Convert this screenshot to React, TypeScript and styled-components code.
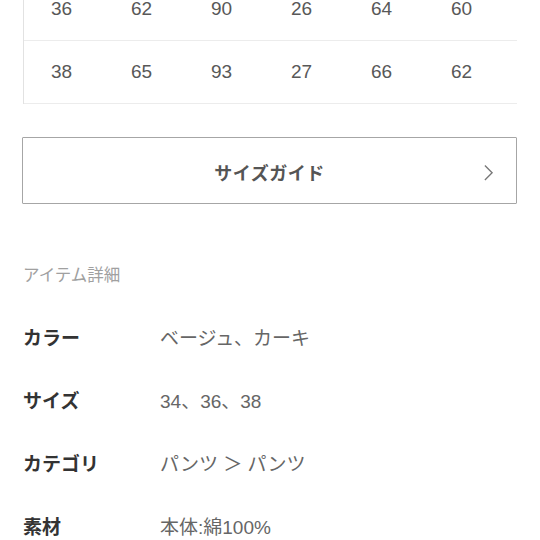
import React from 'react'
import styled, { createGlobalStyle } from 'styled-components'

const GlobalStyle = createGlobalStyle`
  html, body {
    margin: 0;
    padding: 0;
    background: #fff;
    overflow: hidden;
  }
  body {
    font-family: "Liberation Sans", "Noto Sans CJK JP", sans-serif;
    -webkit-font-smoothing: antialiased;
  }
`

const sizeRows = [
  ['36', '62', '90', '26', '64', '60'],
  ['38', '65', '93', '27', '66', '62'],
]

const details = [
  { label: 'カラー', value: 'ベージュ、カーキ' },
  { label: 'サイズ', value: '34、36、38' },
  { label: 'カテゴリ', value: 'パンツ ＞ パンツ' },
  { label: '素材', value: '本体:綿100%' },
]

export default function App() {
  return (
    <>
      <GlobalStyle />
      <Page>
        <SizeTable>
          {sizeRows.map((row, i) => (
            <TableRow key={i}>
              {row.map((cell, j) => (
                <Cell key={j}>{cell}</Cell>
              ))}
            </TableRow>
          ))}
        </SizeTable>

        <GuideButton>
          <span>サイズガイド</span>
          <Chevron viewBox="0 0 12 20" width="11" height="18">
            <path d="M2 2 L10 10 L2 18" fill="none" stroke="#777" strokeWidth="1.5" />
          </Chevron>
        </GuideButton>

        <SectionTitle>アイテム詳細</SectionTitle>

        <DetailList>
          {details.map(d => (
            <DetailRow key={d.label}>
              <Label>{d.label}</Label>
              <Value>{d.value}</Value>
            </DetailRow>
          ))}
        </DetailList>
      </Page>
    </>
  )
}

const Page = styled.div`
  width: 540px;
  height: 540px;
  box-sizing: border-box;
  padding: 0 23px 0 22px;
  overflow: hidden;
`

const SizeTable = styled.div`
  margin-top: -22px;
  border-left: 1px solid #e2e2e2;
  margin-left: 1px;
`

const TableRow = styled.div`
  display: grid;
  grid-template-columns: repeat(6, 80px);
  align-items: center;
  height: 62px;
  padding-left: 27px;
  border-bottom: 1px solid #ececec;
`

const Cell = styled.div`
  font-size: 19px;
  color: #585858;
`

const GuideButton = styled.div`
  margin-top: 33px;
  height: 67px;
  box-sizing: border-box;
  border: 1.5px solid #a6a6a6;
  border-radius: 1px;
  display: flex;
  align-items: center;
  justify-content: center;
  position: relative;

  span {
    font-family: "Noto Sans CJK JP", sans-serif;
    font-size: 18px;
    font-weight: 700;
    color: #555;
    letter-spacing: 0.5px;
    padding-top: 3px;
  }
`

const Chevron = styled.svg`
  position: absolute;
  right: 22px;
  top: 50%;
  transform: translateY(-40%);
`

const SectionTitle = styled.div`
  margin-top: 60px;
  font-family: "Noto Sans CJK JP", sans-serif;
  font-size: 16.5px;
  line-height: 20px;
  color: #a0a0a0;
  padding-left: 1px;
`

const DetailList = styled.div`
  margin-top: 21px;
`

const DetailRow = styled.div`
  display: flex;
  align-items: center;
  height: 63px;
  padding-left: 1px;
`

const Label = styled.div`
  width: 137px;
  font-family: "Noto Sans CJK JP", sans-serif;
  font-size: 19px;
  font-weight: 700;
  color: #333;
`

const Value = styled.div`
  font-family: "Liberation Sans", "Noto Sans CJK JP", sans-serif;
  font-size: 19px;
  color: #666;
`
